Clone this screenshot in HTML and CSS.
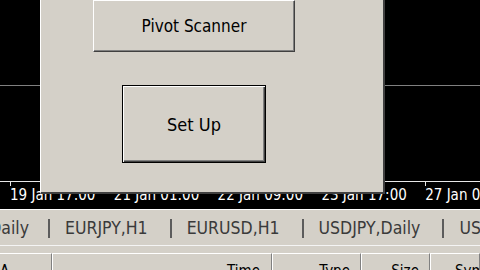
FILE: index.html
```html
<!DOCTYPE html>
<html>
<head>
<meta charset="utf-8">
<link rel="stylesheet" href="styles.css">
</head>
<body>
<div class="screen">
  <div class="chart">
    <div class="gridline"></div>
    <div class="axis">
      <span class="label">19 Jan 17:00</span>
      <span class="label">21 Jan 01:00</span>
      <span class="label">22 Jan 09:00</span>
      <span class="label">23 Jan 17:00</span>
      <span class="label">27 Jan 01:00</span>
    </div>
    <div class="dialog">
      <button class="btn btn-scanner">Pivot Scanner</button>
      <button class="btn btn-setup">Set Up</button>
    </div>
  </div>
  <div class="tabs">
    <div class="tab tab-first"><span>GBPUSD,Daily</span></div>
    <div class="sep"></div>
    <div class="tab">EURJPY,H1</div>
    <div class="sep"></div>
    <div class="tab">EURUSD,H1</div>
    <div class="sep"></div>
    <div class="tab">USDJPY,Daily</div>
    <div class="sep"></div>
    <div class="tab">USDCHF,H1</div>
  </div>
  <div class="strip"></div>
  <div class="header">
    <div class="col col-a">A</div>
    <div class="col col-time">Time</div>
    <div class="col col-type">Type</div>
    <div class="col col-size">Size</div>
    <div class="col col-sym">Symbol</div>
  </div>
</div>
</body>
</html>
```
FILE: styles.css
```css
* { box-sizing: border-box; }
html, body { margin: 0; padding: 0; }
body {
  width: 480px;
  height: 270px;
  overflow: hidden;
  background: #d4d0c8;
  font-family: "DejaVu Sans Condensed", "DejaVu Sans", sans-serif;
}
.screen { width: 480px; height: 270px; overflow: hidden; }

.chart {
  position: relative;
  height: 209px;
  background: #000;
  padding-top: 85px;
  overflow: hidden;
}
.gridline { height: 1px; background: #808080; }
.axis {
  margin-top: 95px;
  border-top: 1px solid #e8e8e8;
  display: flex;
  padding-left: 10px;
  white-space: nowrap;
}
.label {
  position: relative;
  flex: 0 0 103.8px;
  color: #fff;
  font-size: 15px;
  line-height: 15px;
  padding-top: 6px;
}
.label::before {
  content: "";
  position: absolute;
  left: 0;
  top: 0;
  width: 1px;
  height: 4px;
  background: #e8e8e8;
}

.dialog {
  position: absolute;
  z-index: 2;
  left: 40px;
  top: 0;
  width: 345px;
  height: 194px;
  background: #d4d0c8;
  border-left: 1px solid #fff;
  border-right: 2px solid #404040;
  border-bottom: 2px solid #404040;
  display: flex;
  flex-direction: column;
  align-items: flex-start;
}
.btn {
  font-family: "DejaVu Sans Condensed", "DejaVu Sans", sans-serif;
  font-size: 17px;
  color: #000;
  background: #d4d0c8;
  padding: 0;
  margin: 0;
}
.btn-scanner {
  margin-left: 52px;
  width: 202px;
  height: 52px;
  border: 1px solid;
  border-color: #fff #404040 #404040 #fff;
  box-shadow: inset -1px -1px 0 #808080;
}
.btn-setup {
  margin-left: 81px;
  margin-top: 33px;
  width: 144px;
  height: 78px;
  border: 1px solid #000;
  font-size: 18px;
  box-shadow: inset 1px 1px 0 #fff, inset -1px -1px 0 #404040, inset -2px -2px 0 #808080;
}

.tabs {
  height: 33px;
  border-top: 1px solid #fff;
  display: flex;
  align-items: center;
  padding-top: 4px;
  white-space: nowrap;
  color: #3a3a3a;
  font-size: 17.5px;
}
.tab { flex: 0 0 auto; padding: 0 22px 0 15px; }
.tab-first {
  width: 48px;
  padding: 0 19px 0 0;
  display: flex;
  justify-content: flex-end;
  overflow: hidden;
}
.sep {
  flex: 0 0 2px;
  height: 19px;
  background: #5c5c5c;
}

.strip {
  height: 11px;
  padding-top: 3px;
}
.strip::before {
  content: "";
  display: block;
  height: 1px;
  background: #f4f4f4;
}

.header {
  display: flex;
  height: 20px;
  font-size: 15px;
  color: #000;
  white-space: nowrap;
}
.col {
  border-top: 1px solid #fff;
  border-left: 1px solid #fff;
  border-right: 1px solid #808080;
  padding-top: 8px;
  overflow: hidden;
}
.col-a { width: 52px; border-left: none; padding-left: 0; }
.col-time { width: 220px; text-align: right; padding-right: 11px; }
.col-type { width: 89px; text-align: right; padding-right: 10px; }
.col-size { width: 69px; text-align: right; padding-right: 10px; }
.col-sym { flex: 1; padding-left: 24px; }
```
